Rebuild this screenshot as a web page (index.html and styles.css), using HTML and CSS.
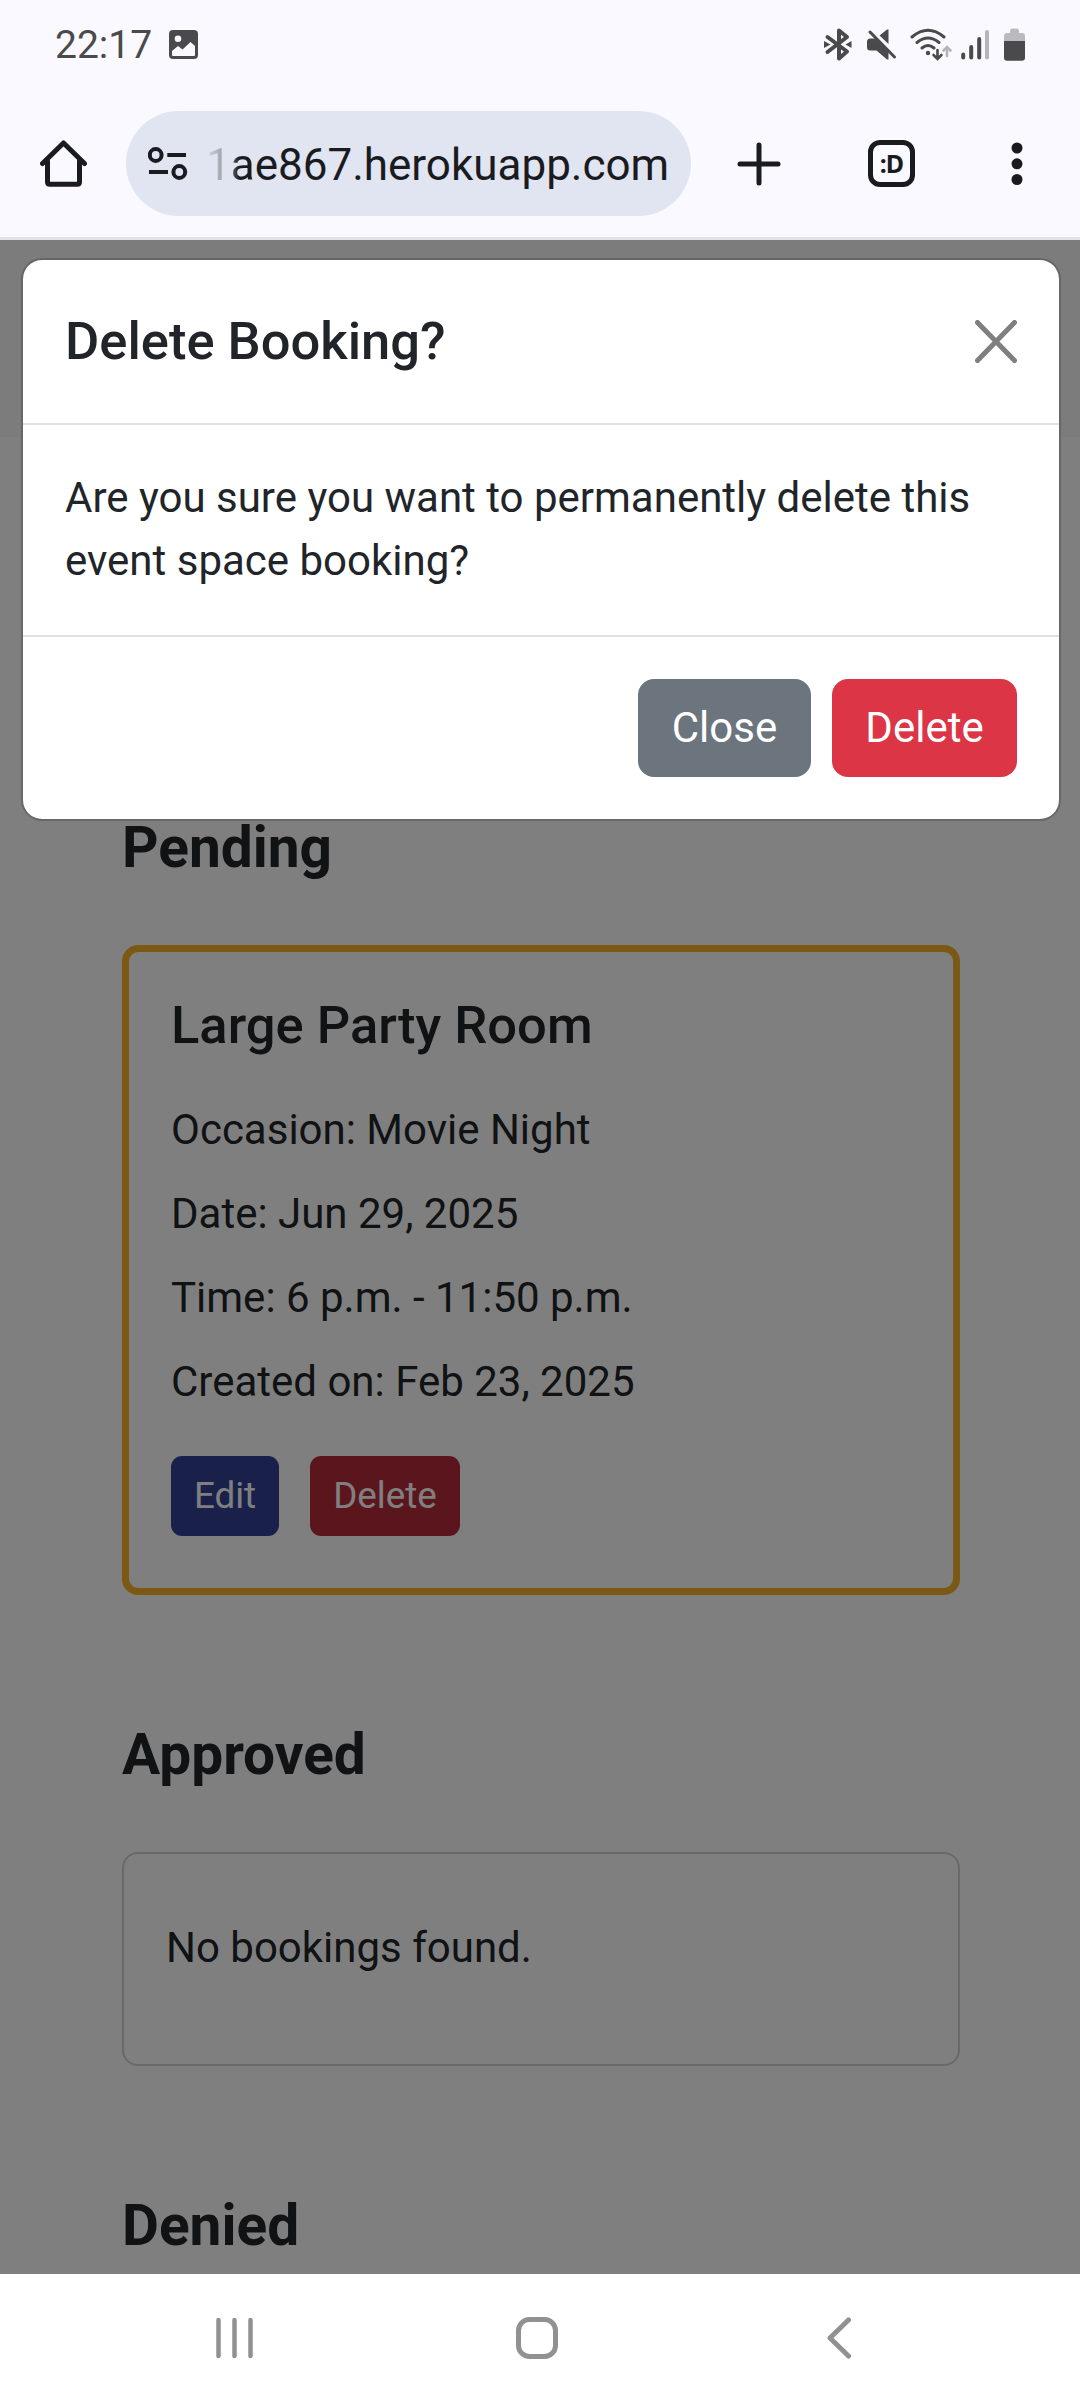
FILE: index.html
```html
<!DOCTYPE html>
<html lang="en">
<head>
<meta charset="utf-8">
<title>My Bookings</title>
<link rel="stylesheet" href="styles.css">
</head>
<body>
<div class="phone">
  <header class="browser">
    <div class="status">
      <span class="clock">22:17</span>
      <svg class="picture" width="29" height="29" viewBox="0 0 29 29"><path fill="#4a4a4c" fill-rule="evenodd" d="M4 0H25Q29 0 29 4V25Q29 29 25 29H4Q0 29 0 25V4Q0 0 4 0ZM9 5.5A3.3 3.3 0 1 0 9 12.100A3.300 3.300 0 1 0 9 5.500ZM3 21V25Q3 26 4 26H25Q26 26 26 25V16L21.500 12L13.500 19.500L9 16Z"/></svg>
      <div class="status-icons">
        <svg width="29" height="36" viewBox="823 27 29 36"><path d="M827.500 37L847 51.500L839 58.500V30.500L847 37L827.500 52" fill="none" stroke="#4a4a4c" stroke-width="4" stroke-linecap="round" stroke-linejoin="round"/><path d="M824 41L830.500 44.500L824 48ZM851.500 41L845.500 44.500L851.500 48Z" fill="#4a4a4c"/></svg>
        <svg width="30" height="36" viewBox="867 27 30 36"><path fill="#4a4a4c" d="M870 38.500H875L888.500 52V59.500H887L876.500 50.500H870Q867 50.500 867 47V42Q867 38.500 870 38.500ZM888.500 29.500V44L879.500 35.500L887 29.500Z"/><path d="M870 32L894.500 57" stroke="#4a4a4c" stroke-width="3" stroke-linecap="round"/></svg>
        <svg class="wifi" width="42" height="36" viewBox="910 27 42 36"><g fill="none" stroke="#4a4a4c" stroke-width="3" stroke-linecap="round"><path d="M912 37Q928 23.500 944 37M917 42.500Q928 33.500 939 42.500M922 48Q928 43 934 48"/><path d="M937.500 50V58M933.500 55L937.500 59L941.500 55" stroke-width="2.600"/><path d="M947 56V47.500M943.500 50.500L947 47L950.500 50.500" stroke="#b5b5b9" stroke-width="2.600"/></g><circle cx="928" cy="53" r="2.200" fill="#4a4a4c"/></svg>
        <svg class="signal" width="28" height="36" viewBox="961 27 28 36"><g stroke="#4a4a4c" stroke-width="4" stroke-linecap="round"><path d="M963.200 54.500V57.500M971.200 47V57.500M979.200 39V57.500"/><path d="M987 32V57.500" stroke="#b5b5b9"/></g></svg>
        <svg width="21" height="36" viewBox="1004 27 21 36"><path fill="#bbbbbf" d="M1004 41V36Q1004 33 1007 33H1010V31Q1010 28.500 1012 28.500H1017Q1019 28.500 1019 31V33H1022Q1025 33 1025 36V41Z"/><path fill="#4a4a4c" d="M1004 41H1025V57.500Q1025 60.800 1022 60.800H1007Q1004 60.800 1004 57.500Z"/></svg>
      </div>
    </div>
    <div class="toolbar">
      <svg class="home" width="48" height="48" viewBox="40 140 48 48"><path d="M42.500 163.500L63.500 143L84.500 163.500M47.500 161V182Q47.500 184.200 49.700 184.200H77.300Q79.500 184.200 79.500 182V161" fill="none" stroke="#1a1b1f" stroke-width="5" stroke-linecap="round" stroke-linejoin="round"/></svg>
      <div class="address">
        <svg width="40" height="34" viewBox="148 147 40 34"><g fill="none" stroke="#1a1b1f" stroke-width="4"><circle cx="155.700" cy="155" r="5.900"/><circle cx="179.300" cy="172" r="5.900"/><path d="M167.300 155H186M149 172H168"/></g></svg>
        <span class="url"><span class="url-fade">1a</span>e867.herokuapp.com</span>
      </div>
      <svg class="plus" width="44" height="44" viewBox="0 0 44 44"><path d="M22 3V41M3 22H41" stroke="#1a1b1f" stroke-width="5" stroke-linecap="round"/></svg>
      <div class="tabs">:D</div>
      <svg class="dots" width="12" height="44" viewBox="0 0 12 44"><g fill="#1a1b1f"><circle cx="6" cy="6" r="5.500"/><circle cx="6" cy="21.800" r="5.500"/><circle cx="6" cy="37.500" r="5.500"/></g></svg>
    </div>
  </header>

  <main class="viewport">
    <div class="site-header"></div>
    <div class="bookings">
      <section class="group">
        <h2 class="group-title">Pending</h2>
        <article class="card card-pending">
          <h3 class="card-title">Large Party Room</h3>
          <p class="line">Occasion: Movie Night</p>
          <p class="line">Date: Jun 29, 2025</p>
          <p class="line">Time: 6 p.m. - 11:50 p.m.</p>
          <p class="line">Created on: Feb 23, 2025</p>
          <div class="card-actions">
            <button class="btn btn-sm btn-edit">Edit</button>
            <button class="btn btn-sm btn-remove">Delete</button>
          </div>
        </article>
      </section>
      <section class="group">
        <h2 class="group-title">Approved</h2>
        <div class="card card-empty">No bookings found.</div>
      </section>
      <section class="group">
        <h2 class="group-title">Denied</h2>
      </section>
    </div>
    <div class="backdrop">
      <div class="modal">
        <div class="modal-header">
          <h1 class="modal-title">Delete Booking?</h1>
          <svg width="42" height="44" viewBox="0 0 42 44"><path d="M2.500 2.500L39.500 40.500M39.500 2.500L2.500 40.500" stroke="#7f7f7f" stroke-width="5" stroke-linecap="round"/></svg>
        </div>
        <div class="modal-body">Are you sure you want to permanently delete this event space booking?</div>
        <div class="modal-footer">
          <button class="btn btn-close">Close</button>
          <button class="btn btn-danger">Delete</button>
        </div>
      </div>
    </div>
  </main>

  <nav class="system-nav">
    <svg width="37" height="42" viewBox="0 0 37 42"><path d="M2.500 3V39M18.500 3V39M34.500 3V39" stroke="#919191" stroke-width="4.500" stroke-linecap="round"/></svg>
    <svg class="nav-home" width="42" height="42" viewBox="0 0 42 42"><rect x="2.500" y="2.500" width="37" height="37" rx="11" fill="none" stroke="#919191" stroke-width="5"/></svg>
    <svg width="24" height="42" viewBox="0 0 24 42"><path d="M21.500 3L3 21L21.500 39" fill="none" stroke="#919191" stroke-width="5" stroke-linecap="round" stroke-linejoin="round"/></svg>
  </nav>
</div>
</body>
</html>
```
FILE: styles.css
```css
* { box-sizing: border-box; }
body { margin: 0; font-family: Roboto, sans-serif; font-size: 42px; line-height: 63px; color: #212529; }
h1, h2, h3, p { margin: 0; }
svg { display: block; flex: none; }

.phone { display: flex; flex-direction: column; width: 1080px; height: 2400px; overflow: hidden; }

.browser { flex: none; height: 240px; background: #faf9ff; border-bottom: 3px solid #dfe2ea; }
.status { display: flex; align-items: flex-start; height: 111px; padding: 27px 55px 0; color: #4a4a4c; }
.clock { width: 114px; font-size: 39px; line-height: 36px; }
.picture { margin-top: 3px; }
.status-icons { display: flex; gap: 15px; margin-left: auto; }
.wifi { margin: 0 -6px 0 -2px; }

.toolbar { display: flex; align-items: center; height: 105px; padding-left: 40px; color: #1a1b1f; }
.address { display: flex; align-items: center; width: 565px; height: 105px; margin: 0 46px 0 38px; padding-left: 22px; border-radius: 53px; background: #e1e5f1; }
.url { margin-left: 18px; padding-top: 3px; font-size: 44px; white-space: nowrap; }
.url-fade { background: linear-gradient(90deg, rgba(26,27,31,.05), rgba(26,27,31,.38) 40%, #1a1b1f 68%); background-clip: text; -webkit-background-clip: text; color: transparent; }
.tabs { display: flex; align-items: center; justify-content: center; width: 47px; height: 47px; margin: 0 96px 0 87px; border: 5px solid #1a1b1f; border-radius: 12px; font: bold 25px/1 "Noto Sans", sans-serif; letter-spacing: -1px; }

.viewport { position: relative; flex: 1; min-height: 0; overflow: hidden; background: #fff; }
.site-header { height: 197px; background: #f8f8f8; }
.bookings { display: flex; flex-direction: column; gap: 125px; padding: 376px 120px 0 122px; }
.group-title { margin-bottom: 63px; font-size: 56.8px; line-height: 69px; font-weight: 700; }
.card { border-radius: 16px; }
.card-pending { height: 650px; padding: 42px; border: 7px solid #f6b228; }
.card-title { margin-bottom: 41px; font-size: 52.5px; line-height: 63px; font-weight: 500; }
.line { margin-bottom: 21px; }
.card-actions { display: flex; gap: 31px; padding-top: 22px; }
.card-empty { height: 214px; padding: 62px 42px; border: 2px solid #d3d3d3; }

.btn { display: block; height: 98px; padding: 0; border: 0; border-radius: 16px; color: #fff; font: 42px/98px Roboto, sans-serif; text-align: center; }
.btn-sm { height: 80px; border-radius: 11px; font-size: 36.75px; line-height: 78px; }
.btn-edit { width: 108px; background: #324296; }
.btn-remove { width: 150px; background: #b72c3a; }
.btn-close { width: 173px; background: #6c757d; }
.btn-danger { width: 185px; background: #dc3545; }

.backdrop { position: absolute; inset: 0; padding: 18px 19px 0 21px; background: rgba(0,0,0,.5); }
.modal { border: 2px solid rgba(0,0,0,.175); border-radius: 21px; background: #fff; background-clip: padding-box; }
.modal-header { display: flex; align-items: center; justify-content: space-between; height: 165px; padding: 0 42px; border-bottom: 2px solid #dee2e6; }
.modal-title { font-size: 52.5px; line-height: 79px; font-weight: 500; }
.modal-body { padding: 41px 42px 43px; }
.modal-footer { display: flex; justify-content: flex-end; gap: 21px; padding: 42px; border-top: 2px solid #dee2e6; }

.system-nav { display: flex; align-items: center; flex: none; height: 126px; padding: 2px 0 0 216px; background: #fff; }
.nav-home { margin: 0 269px 0 263px; }
```
